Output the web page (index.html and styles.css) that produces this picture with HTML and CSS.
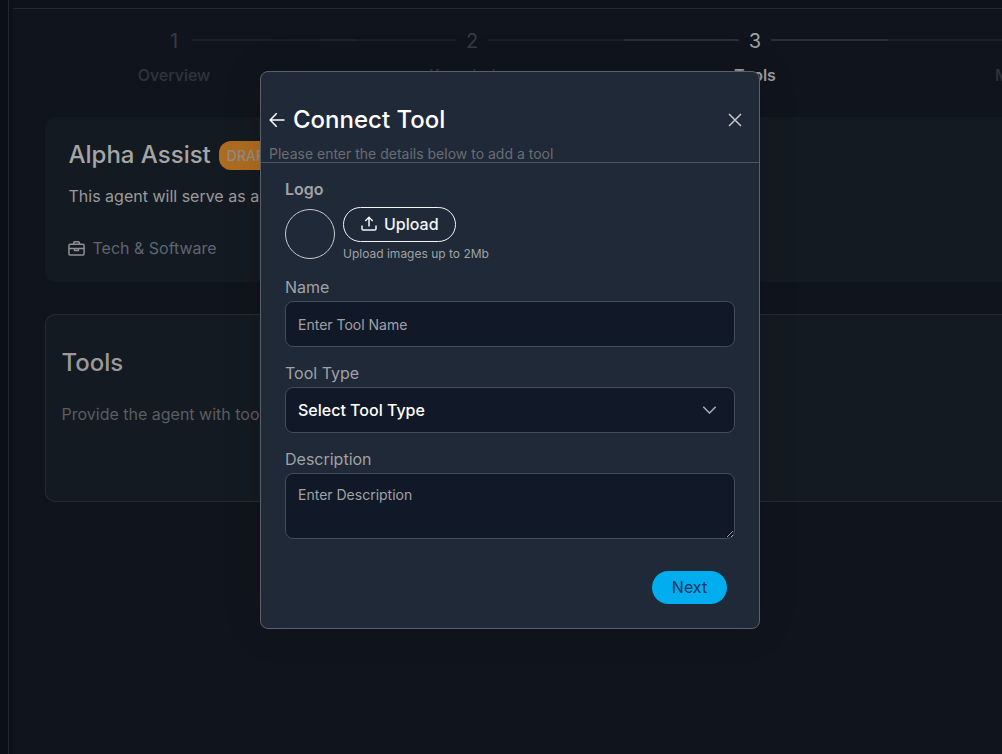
FILE: index.html
```html
<!DOCTYPE html>
<html lang="en">
<head>
<meta charset="utf-8">
<title>Connect Tool</title>
<link rel="stylesheet" href="styles.css">
</head>
<body>
<div class="app">
  <aside class="rail"></aside>
  <div class="gutter"></div>
  <div class="main">
    <div class="topbar"></div>
    <div class="content">
      <div class="steps">
        <div class="step"><span class="step-num">1</span><span class="step-label">Overview</span></div>
        <div class="step-line step-line-first"></div>
        <div class="step"><span class="step-num">2</span><span class="step-label">Knowledge</span></div>
        <div class="step-line step-line-second"></div>
        <div class="step step-active"><span class="step-num">3</span><span class="step-label">Tools</span></div>
        <div class="step-line step-line-third"></div>
        <div class="step"><span class="step-num">4</span><span class="step-label">Messaging</span></div>
      </div>

      <section class="card card-agent">
        <div class="agent-head">
          <h1 class="agent-name">Alpha Assist</h1>
          <span class="badge">DRAFT</span>
        </div>
        <p class="agent-desc">This agent will serve as a helpful assistant for your customers</p>
        <div class="agent-meta">
          <svg class="meta-icon" viewBox="0 0 18 18" fill="none" stroke="currentColor" stroke-width="1.6" aria-hidden="true">
            <rect x="1" y="4.5" width="16" height="11.5" rx="1.5"/>
            <path d="M6 4.5V3a1.2 1.2 0 0 1 1.2-1.2h3.6A1.2 1.2 0 0 1 12 3v1.5"/>
            <path d="M1 9h16"/>
            <path d="M7 9v2h4V9"/>
          </svg>
          <span>Tech &amp; Software</span>
        </div>
      </section>

      <section class="card card-tools">
        <h2 class="tools-title">Tools</h2>
        <p class="tools-desc">Provide the agent with tools it can use to complete its tasks</p>
      </section>
    </div>
  </div>
</div>

<div class="modal" role="dialog" aria-label="Connect Tool">
  <header class="modal-head">
    <div class="modal-title-row">
      <div class="modal-title-group">
        <svg class="back-icon" viewBox="0 0 16 16" fill="none" stroke="currentColor" stroke-width="1.5" aria-hidden="true">
          <path d="M15.5 8H1.2M7.7 1.2 1.2 8l6.5 6.8"/>
        </svg>
        <h2 class="modal-title">Connect Tool</h2>
      </div>
      <svg class="close-icon" viewBox="0 0 14 14" fill="none" stroke="currentColor" stroke-width="1.5" aria-hidden="true">
        <path d="M1 1l12 12M13 1 1 13"/>
      </svg>
    </div>
    <p class="modal-sub">Please enter the details below to add a tool</p>
  </header>
  <div class="modal-body">
    <div class="logo-label">Logo</div>
    <div class="logo-row">
      <div class="logo-circle"></div>
      <div class="logo-upload">
        <button class="upload-btn" type="button">
          <svg class="upload-icon" viewBox="0 0 16 16" fill="none" stroke="currentColor" stroke-width="1.5" aria-hidden="true">
            <path d="M1 9.5v3.2A1.3 1.3 0 0 0 2.3 14h11.4a1.3 1.3 0 0 0 1.3-1.3V9.5"/>
            <path d="M8 10.5V1.3M4.3 5 8 1.3 11.7 5"/>
          </svg>
          <span>Upload</span>
        </button>
        <div class="upload-hint">Upload images up to 2Mb</div>
      </div>
    </div>

    <label class="field-label field-label-first" for="tool-name">Name</label>
    <input class="text-input" id="tool-name" type="text" placeholder="Enter Tool Name">

    <label class="field-label" for="tool-type">Tool Type</label>
    <div class="select-wrap">
      <select class="select-input" id="tool-type">
        <option>Select Tool Type</option>
      </select>
      <svg class="chevron" viewBox="0 0 14 8" fill="none" stroke="currentColor" stroke-width="1.6" aria-hidden="true">
        <path d="M.8.8 7 7l6.2-6.2"/>
      </svg>
    </div>

    <label class="field-label" for="tool-desc">Description</label>
    <textarea class="text-area" id="tool-desc" placeholder="Enter Description"></textarea>

    <div class="modal-actions">
      <button class="next-btn" type="button">Next</button>
    </div>
  </div>
</div>
</body>
</html>
```
FILE: styles.css
```css
* {
  box-sizing: border-box;
}

html,
body {
  margin: 0;
  height: 100%;
  overflow: hidden;
}

body {
  background: #10141c;
  font-family: Inter, "Liberation Sans", sans-serif;
  font-size: 16px;
}

.app {
  display: flex;
  height: 100vh;
}

.rail {
  flex: 0 0 9px;
  background: #0b0f17;
  border-right: 1px solid #23282f;
}

.gutter {
  flex: 0 0 4px;
  background: #0d1119;
}

.main {
  flex: 1;
  min-width: 0;
  display: flex;
  flex-direction: column;
}

.topbar {
  flex: 0 0 9px;
  background: #0e121a;
  border-bottom: 1px solid #24282f;
}

.content {
  padding: 18px 0 0 32px;
}

.steps {
  display: flex;
  align-items: flex-start;
  padding-left: 113px;
  white-space: nowrap;
}

.step {
  flex: 0 0 32px;
  min-width: 0;
  display: flex;
  flex-direction: column;
  align-items: center;
  gap: 8px;
}

.step-num {
  font-size: 20px;
  line-height: 28px;
  color: #363b44;
}

.step-label {
  font-size: 16px;
  line-height: 24px;
  font-weight: 500;
  color: #30343c;
}

.step-active .step-num {
  color: #9ea3a8;
}

.step-active .step-label {
  font-weight: 600;
  color: #9a9a9b;
}

.step-line {
  flex: none;
  height: 2px;
  margin-top: 12px;
  background: #1b2028;
}

.step-line-first {
  width: 264px;
  margin-left: 2px;
  background: linear-gradient(to right, #1b2028 128px, #20252d 128px, #20252d 164px, #1b2028 164px);
}

.step-line-second {
  width: 251px;
  background: linear-gradient(to right, #1b2028 136px, #2a2f37 136px);
}

.step-line-third {
  width: 250px;
  background: linear-gradient(to right, #2a2f37 117px, #1b2028 117px);
}

.card {
  background: #141a21;
  border-radius: 10px 0 0 10px;
}

.card-agent {
  margin-top: 30px;
  padding: 22px 0 21px 23.5px;
  height: 165px;
}

.agent-head {
  display: flex;
  align-items: center;
  gap: 8px;
  white-space: nowrap;
}

.agent-name {
  margin: 0;
  font-size: 24px;
  line-height: 32px;
  font-weight: 500;
  color: #a5a5a5;
}

.badge {
  height: 29px;
  padding: 0 12px 0 8px;
  border-radius: 12px;
  background: #ad6c20;
  color: #8d8d8b;
  font-size: 14px;
  line-height: 29px;
  font-weight: 500;
}

.agent-desc {
  margin: 13px 0 0;
  line-height: 24px;
  color: #9a9b9c;
  white-space: nowrap;
}

.agent-meta {
  display: flex;
  align-items: center;
  gap: 7.5px;
  margin-top: 28px;
  line-height: 24px;
  color: #5f6570;
  white-space: nowrap;
}

.meta-icon {
  width: 17px;
  height: 17px;
  margin-left: -0.5px;
  color: #8d9197;
}

.card-tools {
  margin-top: 32px;
  height: 188px;
  padding: 32px 0 0 15.5px;
  border: 1px solid #262b32;
  border-right: 0;
}

.tools-title {
  margin: 0;
  font-size: 24px;
  line-height: 32px;
  font-weight: 500;
  color: #9a9a9a;
}

.tools-desc {
  margin: 23px 0 0;
  line-height: 24px;
  color: #5c5d60;
  white-space: nowrap;
}

/* Dialog floats over the page */
.modal {
  position: absolute;
  top: 71px;
  left: 260px;
  width: 500px;
  height: 558px;
  background: #1f2937;
  border: 1px solid #5c6066;
  border-radius: 8px;
  box-shadow: 0 0 40px rgba(0, 0, 0, 0.12);
}

.modal-head {
  padding-top: 32px;
  border-bottom: 1px solid #4b5563;
  height: 91px;
}

.modal-title-row {
  display: flex;
  align-items: center;
  justify-content: space-between;
  padding: 0 17px 0 8px;
}

.modal-title-group {
  display: flex;
  align-items: center;
  gap: 8px;
}

.back-icon {
  width: 16px;
  height: 16px;
  color: #fff;
}

.modal-title {
  margin: 0;
  font-size: 24px;
  line-height: 32px;
  font-weight: 500;
  color: #fff;
}

.close-icon {
  width: 14px;
  height: 14px;
  color: #c4c7cb;
}

.modal-sub {
  margin: 10px 0 0;
  padding-left: 8px;
  font-size: 14px;
  line-height: 16px;
  color: #6a6d72;
}

.modal-body {
  padding: 14px 24px 0;
}

.logo-label {
  font-size: 16px;
  line-height: 24px;
  font-weight: 600;
  color: #a0a2a5;
}

.logo-row {
  display: flex;
  gap: 8px;
  margin-top: 6px;
}

.logo-circle {
  width: 50px;
  height: 50px;
  margin-top: 2px;
  border: 1px solid #c8cacd;
  border-radius: 50%;
}

.upload-btn {
  display: flex;
  align-items: center;
  gap: 7px;
  width: 113px;
  height: 35px;
  padding: 0 0 2px 17px;
  border: 1px solid #f3f4f6;
  border-radius: 18px;
  background: transparent;
  color: #f3f4f6;
  font-family: inherit;
  font-size: 16px;
  font-weight: 500;
}

.upload-icon {
  width: 16px;
  height: 16px;
}

.upload-hint {
  margin-top: 4px;
  font-size: 12px;
  line-height: 16px;
  color: #a0a2a5;
}

.field-label {
  display: block;
  margin-top: 14px;
  margin-bottom: 2px;
  line-height: 24px;
  color: #a0a2a5;
}

.field-label-first {
  margin-top: 13px;
}

.text-input,
.select-input,
.text-area {
  display: block;
  width: 100%;
  border: 1px solid #434c5a;
  border-radius: 8px;
  background: #111827;
  font-family: inherit;
  outline: none;
}

.text-input {
  height: 46px;
  padding: 0 12px;
  font-size: 14px;
  color: #fff;
}

.text-input::placeholder,
.text-area::placeholder {
  color: #a0a2a5;
  opacity: 1;
}

.select-wrap {
  position: relative;
}

.select-input {
  height: 46px;
  padding: 0 12px;
  appearance: none;
  font-size: 16px;
  font-weight: 500;
  color: #fff;
}

.chevron {
  position: absolute;
  top: 19px;
  right: 18px;
  width: 15px;
  height: 8px;
  color: #a5a9b0;
  pointer-events: none;
}

.text-area {
  height: 66px;
  padding: 12px;
  font-size: 14px;
  line-height: 18px;
  color: #fff;
}

.modal-actions {
  display: flex;
  justify-content: flex-end;
  margin-top: 32px;
  padding-right: 8px;
}

.next-btn {
  width: 75px;
  height: 33px;
  padding: 0 0 2px;
  border: 0;
  border-radius: 17px;
  background: #00aeef;
  color: #113355;
  font-family: inherit;
  font-size: 16px;
}
```
